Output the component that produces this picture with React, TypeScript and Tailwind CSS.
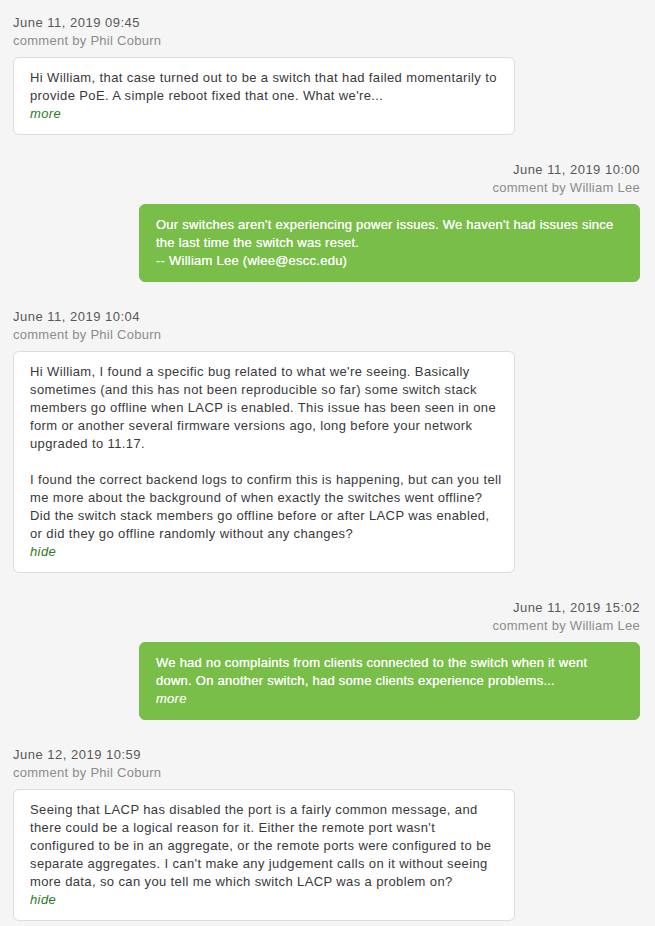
import React from "react";

type Msg = {
  date: string;
  author: string;
  mine: boolean;
  paras: string[][];
  link: string;
};

const msgs: Msg[] = [
  {
    date: "June 11, 2019 09:45",
    author: "Phil Coburn",
    mine: false,
    paras: [
      [
        "Hi William, that case turned out to be a switch that had failed momentarily to",
        "provide PoE. A simple reboot fixed that one. What we're...",
      ],
    ],
    link: "more",
  },
  {
    date: "June 11, 2019 10:00",
    author: "William Lee",
    mine: true,
    paras: [
      [
        "Our switches aren't experiencing power issues. We haven't had issues since",
        "the last time the switch was reset.",
        "-- William Lee (wlee@escc.edu)",
      ],
    ],
    link: "",
  },
  {
    date: "June 11, 2019 10:04",
    author: "Phil Coburn",
    mine: false,
    paras: [
      [
        "Hi William, I found a specific bug related to what we're seeing. Basically",
        "sometimes (and this has not been reproducible so far) some switch stack",
        "members go offline when LACP is enabled. This issue has been seen in one",
        "form or another several firmware versions ago, long before your network",
        "upgraded to 11.17.",
      ],
      [
        "I found the correct backend logs to confirm this is happening, but can you tell",
        "me more about the background of when exactly the switches went offline?",
        "Did the switch stack members go offline before or after LACP was enabled,",
        "or did they go offline randomly without any changes?",
      ],
    ],
    link: "hide",
  },
  {
    date: "June 11, 2019 15:02",
    author: "William Lee",
    mine: true,
    paras: [
      [
        "We had no complaints from clients connected to the switch when it went",
        "down. On another switch, had some clients experience problems...",
      ],
    ],
    link: "more",
  },
  {
    date: "June 12, 2019 10:59",
    author: "Phil Coburn",
    mine: false,
    paras: [
      [
        "Seeing that LACP has disabled the port is a fairly common message, and",
        "there could be a logical reason for it. Either the remote port wasn't",
        "configured to be in an aggregate, or the remote ports were configured to be",
        "separate aggregates. I can't make any judgement calls on it without seeing",
        "more data, so can you tell me which switch LACP was a problem on?",
      ],
    ],
    link: "hide",
  },
];

export default function App() {
  return (
    <div
      className="min-h-[926px] w-[655px] bg-[#f5f5f5] pt-[14px] pl-[13px] pr-[15px] text-[13px] leading-[18px]"
      style={{ fontFamily: '"Liberation Sans", Arial, sans-serif' }}
    >
      {msgs.map((m, i) => (
        <div
          key={i}
          className={`flex flex-col mb-[26px] ${m.mine ? "items-end" : "items-start"}`}
        >
          <div className={`mb-[7px] ${m.mine ? "text-right" : "text-left"}`}>
            <div className="tracking-[0.5px] text-[#58585b]">{m.date}</div>
            <div className="tracking-[0.27px] text-[#8c8c8c]">
              comment by {m.author}
            </div>
          </div>
          <div
            className={
              m.mine
                ? "w-[501px] rounded-[6px] border border-[#78be48] bg-[#78be48] px-4 pt-[11px] pb-[11px] tracking-[0.25px] text-white [text-shadow:0_0_0.25px_#ffffff]"
                : "w-[502px] rounded-[6px] border border-[#dcdcdc] bg-white px-4 pt-[11px] pb-[11px] tracking-[0.38px] text-[#39393b]"
            }
          >
            {m.paras.map((p, j) => (
              <div key={j} className={j > 0 ? "mt-[18px]" : ""}>
                {p.map((line, k) => (
                  <div key={k} className="whitespace-nowrap">
                    {line}
                  </div>
                ))}
              </div>
            ))}
            {m.link && (
              <div
                className={`italic ${m.mine ? "text-[#eef7e8]" : "text-[#2b7b22]"}`}
              >
                {m.link}
              </div>
            )}
          </div>
        </div>
      ))}
    </div>
  );
}
